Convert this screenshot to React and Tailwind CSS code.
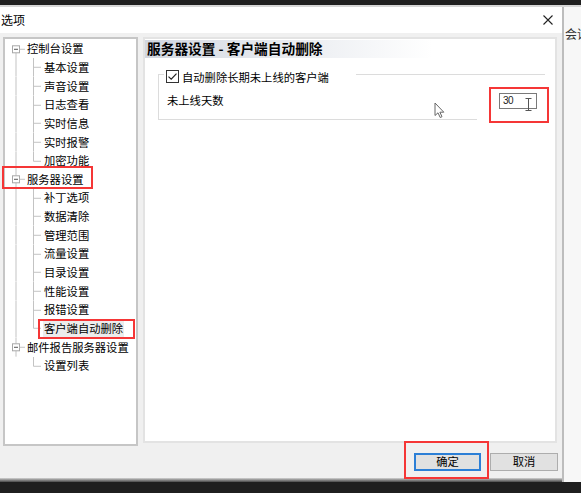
import React from "react";

const FONT = { fontFamily: '"Noto Sans CJK SC", "Noto Sans", sans-serif' };

const tree = [
  { label: "控制台设置", children: ["基本设置", "声音设置", "日志查看", "实时信息", "实时报警", "加密功能"] },
  { label: "服务器设置", children: ["补丁选项", "数据清除", "管理范围", "流量设置", "目录设置", "性能设置", "报错设置", "客户端自动删除"] },
  { label: "邮件报告服务器设置", children: ["设置列表"] },
];

const LINE = "#c3c3c3";

function RootRow({ label, first, last }) {
  return (
    <div className="flex h-[18.65px] items-center">
      <svg width="22" height="18.65" viewBox="0 0 22 18.65" className="shrink-0">
        {!first && <line x1="11" y1="0" x2="11" y2="5.8" stroke={LINE} strokeWidth="1" />}
        <line x1="11" y1="12.8" x2="11" y2="18.65" stroke={LINE} strokeWidth="1" />
        <rect x="7.5" y="5.8" width="7" height="7" fill="#fff" stroke="#a7a7a7" strokeWidth="1" />
        <line x1="9" y1="9.3" x2="13" y2="9.3" stroke="#555" strokeWidth="1" />
        <line x1="14.5" y1="9.3" x2="20" y2="9.3" stroke={LINE} strokeWidth="1" />
      </svg>
      <span className="text-[11.3px] leading-none text-black whitespace-nowrap">{label}</span>
    </div>
  );
}

function ChildRow({ label, parentLast, lastChild, selected }) {
  return (
    <div className="flex h-[18.65px] items-center">
      <svg width="39" height="18.65" viewBox="0 0 39 18.65" className="shrink-0">
        {!parentLast && <line x1="11" y1="0" x2="11" y2="18.65" stroke={LINE} strokeWidth="1" />}
        <line x1="28.5" y1="0" x2="28.5" y2={lastChild ? 9.3 : 18.65} stroke={LINE} strokeWidth="1" />
        <line x1="28.5" y1="9.3" x2="36" y2="9.3" stroke={LINE} strokeWidth="1" />
      </svg>
      <span
        className={
          "text-[11.3px] leading-none text-black whitespace-nowrap " +
          (selected ? "bg-[#ececec] px-[1px] py-[3px] -ml-[1px]" : "")
        }
      >
        {label}
      </span>
    </div>
  );
}

function Tree() {
  const rows = [];
  tree.forEach((node, i) => {
    const first = i === 0;
    const last = i === tree.length - 1;
    rows.push(<RootRow key={node.label} label={node.label} first={first} last={last} />);
    node.children.forEach((c, j) => {
      rows.push(
        <ChildRow
          key={c}
          label={c}
          parentLast={last}
          lastChild={j === node.children.length - 1}
          selected={c === "客户端自动删除"}
        />
      );
    });
  });
  return <div className="flex flex-col pt-[0.7px]">{rows}</div>;
}

export default function App() {
  return (
    <div className="relative w-[581px] h-[493px] bg-[#1f1f1f] flex flex-col overflow-hidden" style={FONT}>
      <div className="h-[5px] bg-[#1f1f1f]" />
      <div className="h-[2px] bg-[#d6d6d6]" />
      <div className="flex h-[475px]">
        {/* dialog */}
        <div className="w-[564px] flex flex-col border-r-2 border-[#bdbdbd]">
          {/* title bar */}
          <div className="h-[26px] bg-white flex items-center justify-between">
            <span className="pl-[1px] text-[12px] leading-none text-black">选项</span>
            <svg width="10" height="10" viewBox="0 0 10 10" className="mr-[9px]">
              <path d="M0.5 0.5 L9.5 9.5 M9.5 0.5 L0.5 9.5" stroke="#222" strokeWidth="1.1" />
            </svg>
          </div>
          {/* body */}
          <div className="h-[445px] bg-[#f0f0f0] flex flex-col pl-[3px] pt-[4px]">
            <div className="flex items-start gap-[5px]">
              <div className="w-[135px] h-[409px] bg-white border-2 border-[#c6c6c6]">
                <Tree />
              </div>
              <div className="w-[414px] h-[406px] bg-white border-2 border-[#e3e3e3] flex flex-col">
                <div className="mt-[1px] h-[18px] flex items-center pl-[2px] bg-linear-to-r from-[#d2d7e0] via-[#e6e9ee] via-30% to-white to-70%">
                  <span className="text-[13.7px] font-bold leading-none text-black whitespace-nowrap">
                    服务器设置 - 客户端自动删除
                  </span>
                </div>
                <fieldset className="ml-[13px] mt-[8px] w-[387px] border-l border-t border-[#dcdcdc] flex flex-col">
                  <legend className="ml-[5px] pl-[2px] pr-[27px] pt-[4px] flex items-center gap-[3px]">
                    <svg width="13" height="13" viewBox="0 0 13 13">
                      <rect x="0.5" y="0.5" width="12" height="12" fill="#fff" stroke="#333" strokeWidth="1" />
                      <path d="M2.5 6.6 L5.2 9.2 L10.5 3.6" fill="none" stroke="#222" strokeWidth="1.2" />
                    </svg>
                    <span className="text-[11.3px] leading-[12px] text-black whitespace-nowrap">
                      自动删除长期未上线的客户端
                    </span>
                  </legend>
                  <div className="h-[36px] flex items-center justify-between pl-[8px] pr-[8px]">
                    <span className="text-[11.3px] leading-none text-black">未上线天数</span>
                    <div className="w-[38px] h-[16px] border border-[#7a7a7a] bg-white flex items-center pl-[3px]">
                      <span
                        className="text-[10px] leading-none text-[#222] tracking-[-0.5px]"
                        style={{ fontFamily: '"Liberation Sans", Arial, sans-serif' }}
                      >
                        30
                      </span>
                    </div>
                  </div>
                  <div className="h-px w-[318px] bg-[#dcdcdc]" />
                </fieldset>
              </div>
            </div>
            <div className="flex justify-end gap-[9px] pr-[4px] mt-[7px]">
              <button className="w-[67px] h-[18px] bg-[#e1e1e1] border-2 border-[#2c7fd6] flex items-center justify-center text-[11.3px] leading-none text-black">
                确定
              </button>
              <button className="w-[68px] h-[18px] bg-[#e1e1e1] border border-[#adadad] flex items-center justify-center text-[11.3px] leading-none text-black">
                取消
              </button>
            </div>
          </div>
          <div className="h-[4px] bg-linear-to-b from-[#d4d4d4] to-[#4a4a4a]" />
        </div>
        {/* outside strip */}
        <div className="flex-1 bg-[#f7f7f7] overflow-hidden pt-[21px]">
          <span className="block text-[12px] leading-none text-[#333] whitespace-nowrap pl-[1px]">会话</span>
        </div>
      </div>

      {/* overlays: cursors */}
      <svg className="absolute left-[434px] top-[102px]" width="11" height="17" viewBox="0 0 11 17">
        <path d="M1 1 L1 13.5 L4 10.8 L6.2 15.5 L8 14.7 L5.9 10.2 L9.8 10.2 Z" fill="#fff" stroke="#666" strokeWidth="1" strokeLinejoin="round" />
      </svg>
      <svg className="absolute left-[525px] top-[98px]" width="7" height="13" viewBox="0 0 7 13">
        <path d="M0.5 0.5 H6.5 M3.5 0.5 V12.5 M0.5 12.5 H6.5" stroke="#555" strokeWidth="1" fill="none" />
      </svg>

      {/* annotation boxes */}
      <div className="absolute left-[2px] top-[166px] w-[91px] h-[23px] border-[2.5px] border-[#f53636]" />
      <div className="absolute left-[38px] top-[319px] w-[97px] h-[20px] border-[2.5px] border-[#f53636]" />
      <div className="absolute left-[489px] top-[87px] w-[60px] h-[36px] border-[2.5px] border-[#f53636]" />
      <div className="absolute left-[404px] top-[441px] w-[85px] h-[38px] border-[2.5px] border-[#f53636]" />
    </div>
  );
}
